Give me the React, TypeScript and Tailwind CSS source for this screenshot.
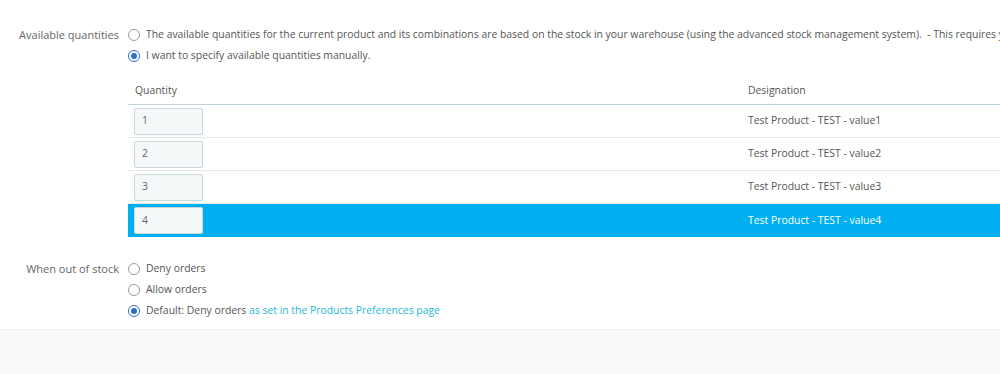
import React from "react";

type RadioProps = { checked?: boolean; children: React.ReactNode };

const Radio = ({ checked, children }: RadioProps) => (
  <label className="flex items-center h-[21px] whitespace-nowrap">
    {checked ? (
      <span className="w-[12px] h-[12px] rounded-full border border-[#2a6fc9] flex items-center justify-center shrink-0">
        <span className="w-[6px] h-[6px] rounded-full bg-[#2a6fc9]" />
      </span>
    ) : (
      <span className="w-[12px] h-[12px] rounded-full border border-[#9a9a9a] bg-white shrink-0" />
    )}
    <span className="ml-[6px]">{children}</span>
  </label>
);

const rows = [1, 2, 3, 4];

export default function App() {
  return (
    <div
      className="w-[1000px] h-[374px] overflow-hidden bg-white text-[10.4px] text-[#555]"
      style={{ fontFamily: '"Open Sans", sans-serif' }}
    >
      <div className="h-[330px] border-b border-[#eef0f2] pt-[24px]">
        <div className="flex">
          <div className="w-[128px] shrink-0 text-right pr-[9px] text-[11px] leading-[21px] text-[#666]">
            Available quantities
          </div>
          <div className="flex-1 min-w-0">
            <Radio>
              The available quantities for the current product and its combinations are based on the stock in your warehouse (using the advanced stock management system).&nbsp; - This requires you to enable advanced stock management
            </Radio>
            <Radio checked>I want to specify available quantities manually.</Radio>
            <div className="mt-[12px] -mr-[20px]">
              <div className="flex h-[27px] items-center border-b border-[#bcd3db]">
                <div className="w-[613px] pl-[7px]">Quantity</div>
                <div className="pl-[7px]">Designation</div>
              </div>
              {rows.map((n) => (
                <div
                  key={n}
                  className={
                    n === 4
                      ? "flex h-[33px] items-center bg-[#00aff0] text-white"
                      : "flex h-[33px] items-center border-b border-[#e5e9ea]"
                  }
                >
                  <div className="w-[613px] pl-[6px]">
                    <div className="w-[69px] h-[27px] bg-[#f5f8f9] border border-[#c9d8dc] rounded-[2px] flex items-center pl-[7px] text-[#666]">
                      {n}
                    </div>
                  </div>
                  <div className="pl-[7px]">Test Product - TEST - value{n}</div>
                </div>
              ))}
            </div>
          </div>
        </div>

        <div className="flex mt-[21px]">
          <div className="w-[128px] shrink-0 text-right pr-[9px] text-[11px] leading-[21px] text-[#666]">
            When out of stock
          </div>
          <div className="flex-1">
            <Radio>Deny orders</Radio>
            <Radio>Allow orders</Radio>
            <Radio checked>
              Default: Deny orders{" "}
              <a className="text-[#25b9d7]">as set in the Products Preferences page</a>
            </Radio>
          </div>
        </div>
      </div>
      <div className="h-[44px] bg-[#f8fafc]" />
    </div>
  );
}
